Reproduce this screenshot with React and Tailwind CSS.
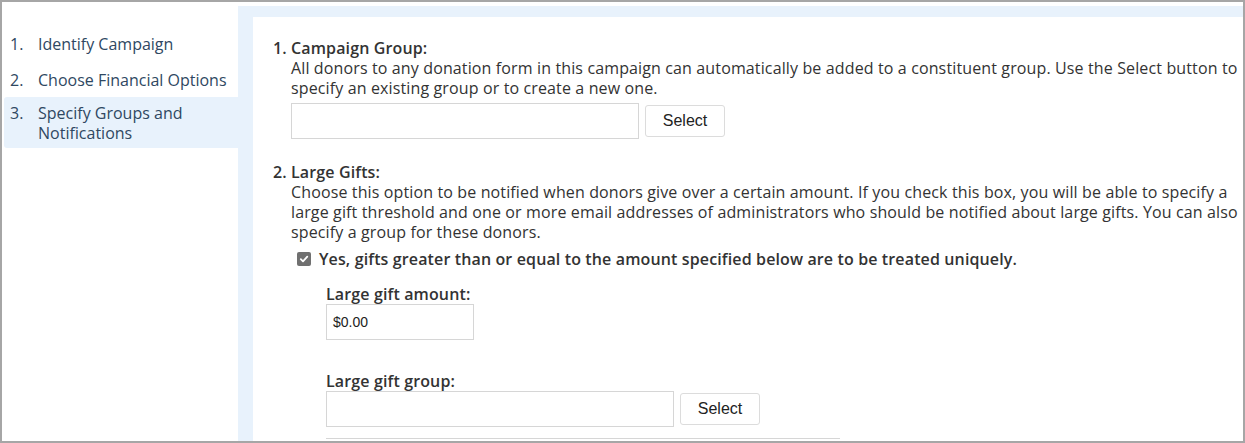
const steps = [
  { n: "1.", label: "Identify Campaign" },
  { n: "2.", label: "Choose Financial Options" },
  { n: "3.", label: "Specify Groups and Notifications", active: true },
];

function SelectButton() {
  return (
    <button className="h-[32px] w-[80px] rounded-[3px] border border-[#dcdcdc] bg-white text-[16px] tracking-normal text-[#222] font-['Liberation_Sans',Arial,sans-serif]">
      Select
    </button>
  );
}

function GroupPicker() {
  return (
    <div className="flex items-center gap-[6px]">
      <div className="h-[36px] w-[348px] border border-[#d6d6d6] bg-white" />
      <SelectButton />
    </div>
  );
}

export default function App() {
  return (
    <div className="w-[1245px] h-[443px] overflow-hidden border-2 border-[#a6a6a6] bg-white text-[16px] leading-[20px] text-[#333] font-['Open_Sans',sans-serif] flex">
      {/* Steps */}
      <div className="w-[236px] shrink-0 pt-[26px] pl-[2px] text-[#2f4862]">
        {steps.map((s, i) => (
          <div
            key={s.n}
            className={
              s.active
                ? "flex rounded-l-[3px] bg-[#e8f2fc] pl-[6px] pt-[6px] pb-[5px] mt-[1px]"
                : i === 0
                ? "flex pl-[6px] py-[6px]"
                : "flex pl-[6px] py-[6px] mt-[4px]"
            }
          >
            <span className="w-[28px] shrink-0">{s.n}</span>
            <span className="w-[196px]">{s.label}</span>
          </div>
        ))}
      </div>

      {/* Main */}
      <div className="flex-1 pt-[4px] flex flex-col">
        <div className="flex-1 bg-[#e8f2fc] pl-[15px] pt-[11px] flex">
          <div className="flex-1 bg-white pl-[20px] pt-[21px] tracking-[0.13px]">
            <div className="flex">
              <span className="w-[18px] shrink-0 font-semibold tracking-normal">1.</span>
              <div>
                <div className="font-semibold">Campaign Group:</div>
                <p>
                  All donors to any donation form in this campaign can automatically be added to a constituent group. Use the Select button to specify an existing group or to create a new one.
                </p>
                <div className="mt-[5px]">
                  <GroupPicker />
                </div>
              </div>
            </div>

            <div className="flex mt-[23px]">
              <span className="w-[18px] shrink-0 font-semibold tracking-normal">2.</span>
              <div>
                <div className="font-semibold">Large Gifts:</div>
                <p>
                  Choose this option to be notified when donors give over a certain amount. If you check this box, you will be able to specify a large gift threshold and one or more email addresses of administrators who should be notified about large gifts. You can also specify a group for these donors.
                </p>
                <div className="flex items-center mt-[7px] pl-[6px] h-[20px]">
                  <span className="w-[14px] h-[14px] rounded-[2px] bg-[#707070] flex items-center justify-center">
                    <svg width="10" height="10" viewBox="0 0 10 10" fill="none">
                      <path d="M1.8 5.2 L4 7.4 L8.3 2.6" stroke="white" strokeWidth="1.8" strokeLinecap="round" strokeLinejoin="round" />
                    </svg>
                  </span>
                  <span className="ml-[8px] font-semibold">
                    Yes, gifts greater than or equal to the amount specified below are to be treated uniquely.
                  </span>
                </div>

                <div className="pl-[35px] mt-[15px]">
                  <div className="font-semibold">Large gift amount:</div>
                  <div className="h-[36px] w-[148px] border border-[#d6d6d6] bg-white flex items-center pl-[6px] text-[14px] tracking-normal text-[#222] font-['Liberation_Sans',Arial,sans-serif]">
                    $0.00
                  </div>

                  <div className="font-semibold mt-[31px]">Large gift group:</div>
                  <GroupPicker />
                  <div className="mt-[11px] w-[514px] border-t border-[#d6d6d6]" />
                </div>
              </div>
            </div>
          </div>
        </div>
      </div>
    </div>
  );
}
